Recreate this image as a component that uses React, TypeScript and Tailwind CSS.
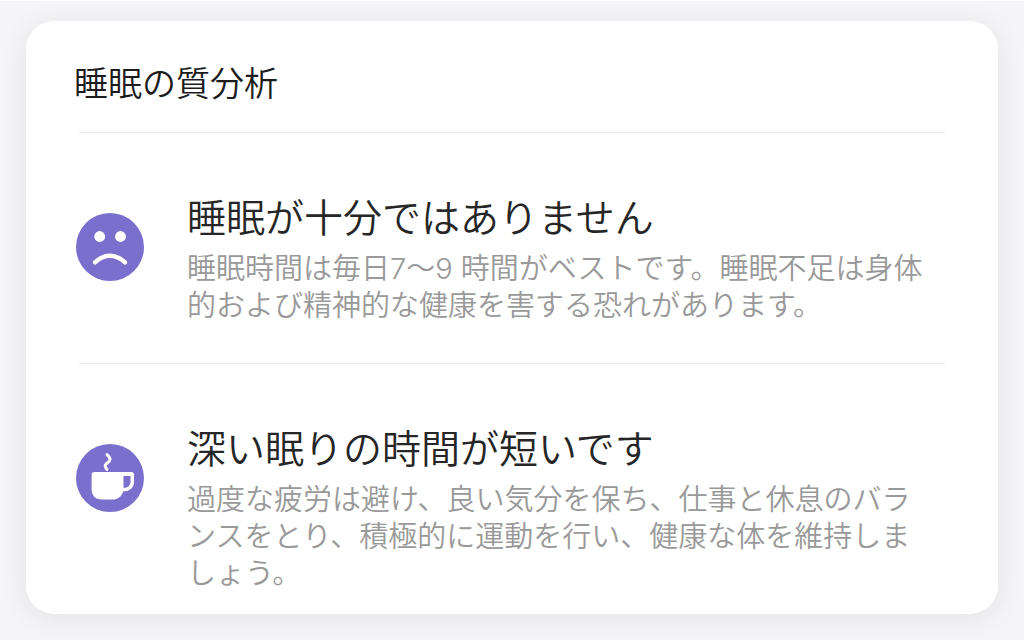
import React from 'react';

function SadFaceIcon() {
  return (
    <svg viewBox="0 0 68 68" className="h-[68px] w-[68px]" aria-hidden="true">
      <circle cx="34" cy="34" r="34" fill="#7b6fcd" />
      <circle cx="23.7" cy="23.5" r="5.4" fill="#fff" />
      <circle cx="44.5" cy="23.5" r="5.4" fill="#fff" />
      <path d="M19 49.3Q34 36.3 49 49.3" fill="none" stroke="#fff" strokeWidth="4.4" strokeLinecap="round" />
    </svg>
  );
}

function CupIcon() {
  return (
    <svg viewBox="0 0 68 68" className="h-[68px] w-[68px]" aria-hidden="true">
      <circle cx="34" cy="34" r="34" fill="#7b6fcd" />
      <path d="M18 28H55.500Q58 28 58 30.500V37.500C58 43.800 54 47.300 47.300 47.300C45.800 52 42.500 55.500 37.500 55.500H25.500C19.500 55.500 15.600 51.500 15.600 45.500V30.500Q15.600 28 18 28Z" fill="#fff" />
      <path d="M47.500 32H54.500V37.500C54.500 41.500 52 43.800 47.500 43.800Z" fill="#7b6fcd" />
      <path d="M31 10.500C35.500 15 34.500 16.500 31.500 18.800C28.500 21 28.500 22.500 31 25.500" fill="none" stroke="#fff" strokeWidth="3" strokeLinecap="round" />
    </svg>
  );
}

const items = [
  {
    icon: <SadFaceIcon />,
    title: '睡眠が十分ではありません',
    text: '睡眠時間は毎日7〜9 時間がベストです。睡眠不足は身体的および精神的な健康を害する恐れがあります。',
  },
  {
    icon: <CupIcon />,
    title: '深い眠りの時間が短いです',
    text: '過度な疲労は避け、良い気分を保ち、仕事と休息のバランスをとり、積極的に運動を行い、健康な体を維持しましょう。',
  },
];

export default function App() {
  return (
    <main
      lang="ja"
      className="min-h-screen border-t border-white bg-[#f5f5f7] px-[26px] pt-5 pb-[26px] font-['Inter','Noto_Sans_CJK_JP',sans-serif] font-[350]"
    >
      <section className="rounded-[28px] bg-white pt-[38px] pr-[53px] pb-[22px] pl-[50px] shadow-[0_4px_28px_rgba(0,0,0,0.08)]">
        <h1 className="-ml-0.5 pb-[23px] text-[34px] leading-[50px] text-[#1c1c1c]">睡眠の質分析</h1>
        {items.map((item) => (
          <article key={item.title} className="ml-[3px] border-t border-[#e8e8ea] pb-[39px] last:pb-0">
            <div className="-ml-[3px] flex items-start gap-[43px] pr-4">
              <div className="shrink-0 pt-20">{item.icon}</div>
              <div className="min-w-0 flex-1 pt-[61px]">
                <h2 className="text-[39px] leading-12 text-[#262626]">{item.title}</h2>
                <p className="mt-2 text-[29px] leading-[37px] text-[#999]">{item.text}</p>
              </div>
            </div>
          </article>
        ))}
      </section>
    </main>
  );
}
